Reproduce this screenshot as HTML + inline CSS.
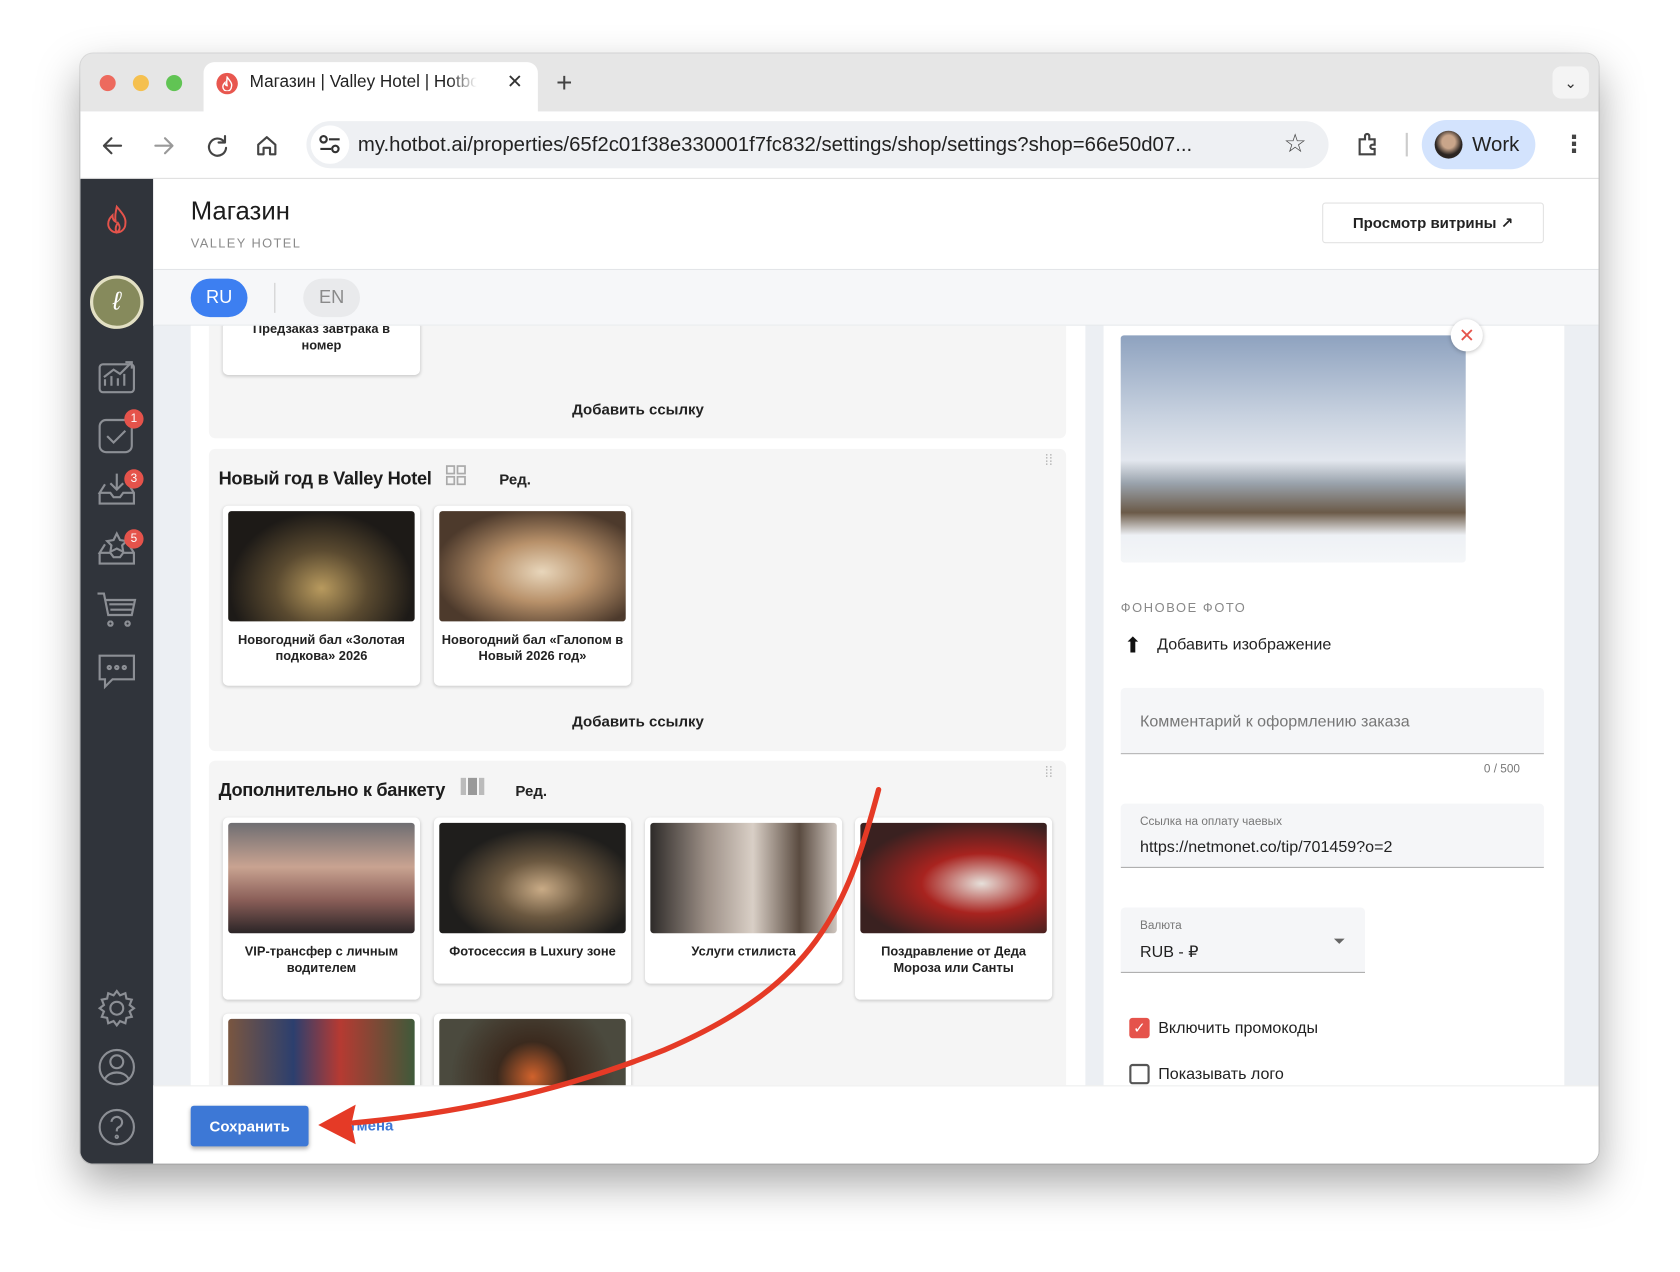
<!DOCTYPE html>
<html><head><meta charset="utf-8"><style>
*{box-sizing:border-box;margin:0;padding:0}
html,body{width:1680px;height:1271px;overflow:hidden;background:#fff;font-family:"Liberation Sans","DejaVu Sans",sans-serif}
#s{position:absolute;left:0;top:0;width:1568px;height:1187px;transform:scale(1.07143);transform-origin:0 0}
.a{position:absolute}
.win{left:75px;top:50px;width:1417px;height:1036px;border-radius:12px;overflow:hidden;box-shadow:0 18px 40px rgba(0,0,0,.35),0 0 0 1px rgba(0,0,0,.12);background:#eceff3}
.card{position:absolute;width:184px;background:#fff;border-radius:5px;box-shadow:0 1px 3px rgba(0,0,0,.18)}
.card .im{position:absolute;left:5px;top:5px;width:174px;height:103px;border-radius:3px}
.card .t{position:absolute;left:4px;right:4px;top:118px;text-align:center;font-size:12px;font-weight:bold;color:#222;line-height:15px}
.sec{position:absolute;left:120px;width:800px;background:#f5f5f5;border-radius:6px}
.ico{stroke:#8c8f95;fill:none;stroke-width:2}
.badge{position:absolute;width:18px;height:18px;border-radius:9px;background:#e5534b;color:#fff;font-size:11px;text-align:center;line-height:18px}
</style></head><body><div id="s">
<div class="a win">
 <div class="a" style="left:0;top:0;width:1417px;height:54px;background:#e6e6e6"></div>
 <div class="a" style="left:18px;top:20px;width:15px;height:15px;border-radius:8px;background:#ed6a5e"></div>
 <div class="a" style="left:49px;top:20px;width:15px;height:15px;border-radius:8px;background:#f5c04f"></div>
 <div class="a" style="left:80px;top:20px;width:15px;height:15px;border-radius:8px;background:#61c454"></div>
 <div class="a" style="left:115px;top:8px;width:312px;height:50px;background:#fff;border-radius:10px 10px 0 0"></div>
 <div class="a" style="left:127px;top:18px;width:20px;height:20px;border-radius:10px;background:#e8574f"></div>
 <svg class="a" style="left:131px;top:21px" width="12" height="14"><path d="M6 1c3 4 5 6 4 9a4 4 0 0 1-8 0c0-2 1-3 2-4 0 2 1 3 2 3-1-3 0-6 0-8z" fill="none" stroke="#fff" stroke-width="1.3"/></svg>
 <div class="a" style="left:158px;top:18px;font-size:16px;color:#222;width:212px;white-space:nowrap;overflow:hidden;-webkit-mask-image:linear-gradient(90deg,#000 88%,transparent)">Магазин | Valley Hotel | Hotbot</div>
 <div class="a" style="left:398px;top:16px;font-size:18px;color:#333">✕</div>
 <div class="a" style="left:444px;top:12px;font-size:26px;color:#444">+</div>
 <div class="a" style="left:1374px;top:12px;width:34px;height:30px;border-radius:8px;background:#f4f4f4;text-align:center;font-size:14px;line-height:30px;color:#333">⌄</div>
 <div class="a" style="left:0;top:54px;width:1417px;height:63px;background:#fff;border-bottom:1px solid #ddd"></div>
 <svg class="a" style="left:18px;top:74px" width="200" height="24" viewBox="0 0 200 24"><g fill="none" stroke="#444" stroke-width="2" stroke-linecap="round" stroke-linejoin="round"><path d="M20 12H5M11 5l-7 7 7 7"/><path d="M52 12h15M61 5l7 7-7 7" stroke="#999"/><path d="M116 8a8 8 0 1 0 2 6M117 3v6h-6"/><path d="M148 20v-9l8-7 8 7v9h-5v-6h-6v6z"/></g></svg>
 <div class="a" style="left:211px;top:63px;width:954px;height:44px;border-radius:22px;background:#eef0f3"></div>
 <div class="a" style="left:215px;top:67px;width:36px;height:36px;border-radius:18px;background:#fff"></div>
 <svg class="a" style="left:222px;top:75px" width="22" height="20"><g fill="none" stroke="#333" stroke-width="2"><circle cx="5" cy="5" r="3"/><path d="M10 5h10M2 14h10"/><circle cx="16" cy="14" r="3"/></g></svg>
 <div class="a" style="left:259px;top:75px;font-size:19px;color:#222;white-space:nowrap">my.hotbot.ai/properties/65f2c01f38e330001f7fc832/settings/shop/settings?shop=66e50d07...</div>
 <div class="a" style="left:1123px;top:70px;font-size:24px;color:#444">☆</div>
 <svg class="a" style="left:1190px;top:73px" width="24" height="24"><path d="M4 7h5V4a2 2 0 0 1 4 0v3h5v5h-2a2 2 0 0 0 0 4h2v5H4z" fill="none" stroke="#444" stroke-width="2"/></svg>
 <div class="a" style="left:1237px;top:74px;width:2px;height:22px;background:#ccc"></div>
 <div class="a" style="left:1252px;top:62px;width:106px;height:46px;border-radius:23px;background:#d3e3fd"></div>
 <div class="a" style="left:1264px;top:72px;width:26px;height:26px;border-radius:13px;background:radial-gradient(circle at 50% 40%,#c9a58a 30%,#2b2522 60%)"></div>
 <div class="a" style="left:1299px;top:75px;font-size:19px;color:#222">Work</div>
 <div class="a" style="left:1383px;top:72px;font-size:22px;color:#444;font-weight:bold">⋮</div>
 <div class="a" style="left:0;top:117px;width:68px;height:919px;background:#30343b"></div>
 <svg class="a" style="left:23px;top:141px" width="22" height="28"><path d="M11 2c5 6 9 10 8 16a8 8 0 0 1-16 0c0-4 2-6 4-8 0 3 1 5 3 6-1-5 0-9 1-14zM11 26c-2-3-1-6 1-9 2 3 3 6-1 9z" fill="none" stroke="#e5534b" stroke-width="1.8"/></svg>
 <div class="a" style="left:9px;top:207px;width:50px;height:50px;border-radius:25px;background:#868a5c;border:3px solid #e3e0c4;color:#fff;font-size:24px;text-align:center;line-height:44px;font-style:italic">ℓ</div>
 <svg class="a" style="left:14px;top:282px" width="40" height="400" viewBox="0 0 40 400">
  <g class="ico"><rect x="4" y="8" width="32" height="26" rx="3"/><path d="M9 28v-6M15 28v-9M21 28v-7M27 28v-11M8 20l9-7 6 4 11-11M28 6h6v6"/>
  <rect x="4" y="60" width="30" height="30" rx="6"/><path d="M11 75l6 6 11-11"/>
  <path d="M4 128v10h32v-10l-5-8M9 120l-5 8h10l3 4h6l3-4h10M20 110v14M14 119l6 6 6-6"/>
  <path d="M4 184v10h32v-10l-5-8M9 176l-5 8h10l3 4h6l3-4h10M20 166l3 6 6 1-4 4 1 6-6-3-6 3 1-6-4-4 6-1z"/>
  <path d="M2 222h6l4 20h22l3-14H10M14 248a2 2 0 1 0 .1 0M30 248a2 2 0 1 0 .1 0M13 232h22M14 237h20"/>
  <path d="M4 280h32v22H16l-7 7v-7H4z"/><circle cx="13" cy="291" r="1" stroke-width="3"/><circle cx="20" cy="291" r="1" stroke-width="3"/><circle cx="27" cy="291" r="1" stroke-width="3"/></g></svg>
 <div class="badge" style="left:41px;top:332px">1</div>
 <div class="badge" style="left:41px;top:388px">3</div>
 <div class="badge" style="left:41px;top:444px">5</div>
 <svg class="a" style="left:14px;top:871px" width="40" height="160" viewBox="0 0 40 160"><g class="ico">
  <circle cx="20" cy="20" r="6"/><path d="M20 4l3 4 5-2 1 5 5 1-2 5 4 3-4 3 2 5-5 1-1 5-5-2-3 4-3-4-5 2-1-5-5-1 2-5-4-3 4-3-2-5 5-1 1-5 5 2z"/>
  <circle cx="20" cy="75" r="16"/><circle cx="20" cy="70" r="6"/><path d="M9 86c4-8 18-8 22 0"/>
  <circle cx="20" cy="131" r="16"/><path d="M15 126a5 5 0 1 1 7 5c-2 1-2 2-2 4"/><circle cx="20" cy="140" r=".8" stroke-width="2.5"/></g></svg>
 <div class="a" style="left:68px;top:117px;width:1349px;height:85px;background:#fff;border-bottom:1px solid #e3e5e8"></div>
 <div class="a" style="left:103px;top:134px;font-size:24px;color:#1c1c1c">Магазин</div>
 <div class="a" style="left:103px;top:170px;font-size:12px;color:#8a8a8a;letter-spacing:1.3px">VALLEY HOTEL</div>
 <div class="a" style="left:1159px;top:139px;width:207px;height:38px;border:1px solid #e2e2e2;border-radius:3px;background:#fff;font-size:14px;font-weight:bold;color:#222;text-align:center;line-height:36px">Просмотр витрины ↗</div>
 <div class="a" style="left:68px;top:202px;width:1349px;height:52px;background:#f6f7f9;border-bottom:1px solid #e6e8eb"></div>
 <div class="a" style="left:103px;top:210px;width:53px;height:36px;border-radius:18px;background:#3d7ff1;color:#fff;font-size:17px;text-align:center;line-height:36px">RU</div>
 <div class="a" style="left:181px;top:214px;width:1px;height:28px;background:#ccc"></div>
 <div class="a" style="left:208px;top:210px;width:53px;height:36px;border-radius:18px;background:#e9eaec;color:#8a8a8a;font-size:17px;text-align:center;line-height:36px">EN</div>
 <div class="a" style="left:103px;top:254px;width:835px;height:709px;background:#fff;overflow:hidden">
  <div class="sec" style="left:17px;top:-20px;height:125px"></div>
  <div class="card" style="left:30px;top:-20px;height:66px"><div class="t" style="top:16px;left:18px;right:18px">Предзаказ завтрака в номер</div></div>
  <div class="a" style="left:0;width:835px;top:70px;text-align:center;font-size:14px;font-weight:bold;color:#222">Добавить ссылку</div>
  <div class="sec" style="left:17px;top:115px;height:282px"></div>
  <div class="a" style="left:26px;top:133px;font-size:17px;font-weight:bold;color:#1c1c1c;letter-spacing:-.3px">Новый год в Valley Hotel</div>
  <svg class="a" style="left:238px;top:130px" width="20" height="20"><g fill="none" stroke="#aaa" stroke-width="1.6"><rect x="1" y="1" width="7" height="7"/><rect x="11" y="1" width="7" height="7"/><rect x="1" y="11" width="7" height="7"/><rect x="11" y="11" width="7" height="7"/></g></svg>
  <div class="a" style="left:288px;top:135px;font-size:14px;font-weight:bold;color:#222">Ред.</div>
  <div class="a" style="left:797px;top:122px;color:#bbb;font-size:14px;line-height:7px">⁞⁞</div>
  <div class="card" style="left:30px;top:168px;height:168px"><div class="im" style="background:radial-gradient(ellipse at 50% 70%,#b89a5e 0%,#5a4a30 35%,#1d1a17 70%)"></div><div class="t">Новогодний бал «Золотая подкова» 2026</div></div>
  <div class="card" style="left:227px;top:168px;height:168px"><div class="im" style="background:radial-gradient(ellipse at 55% 55%,#e8d6bb 0%,#b8916a 35%,#4d3a2c 75%)"></div><div class="t">Новогодний бал «Галопом в Новый 2026 год»</div></div>
  <div class="a" style="left:0;width:835px;top:361px;text-align:center;font-size:14px;font-weight:bold;color:#222">Добавить ссылку</div>
  <div class="sec" style="left:17px;top:406px;height:320px"></div>
  <div class="a" style="left:26px;top:424px;font-size:17px;font-weight:bold;color:#1c1c1c;letter-spacing:-.3px">Дополнительно к банкету</div>
  <div class="a" style="left:252px;top:422px;width:22px;height:16px;background:linear-gradient(90deg,#bbb 0 22%,transparent 22% 30%,#999 30% 70%,transparent 70% 78%,#bbb 78%)"></div>
  <div class="a" style="left:303px;top:426px;font-size:14px;font-weight:bold;color:#222">Ред.</div>
  <div class="a" style="left:797px;top:413px;color:#bbb;font-size:14px;line-height:7px">⁞⁞</div>
  <div class="card" style="left:30px;top:459px;height:170px"><div class="im" style="background:linear-gradient(180deg,#6f6e72 0%,#c9a391 40%,#8a5e58 70%,#2b2527 100%)"></div><div class="t">VIP-трансфер с личным водителем</div></div>
  <div class="card" style="left:227px;top:459px;height:155px"><div class="im" style="background:radial-gradient(ellipse at 55% 60%,#c9ab86 0%,#6b5840 30%,#1f1e1c 65%)"></div><div class="t">Фотосессия в Luxury зоне</div></div>
  <div class="card" style="left:424px;top:459px;height:155px"><div class="im" style="background:linear-gradient(90deg,#2e2b29 0%,#9c8f86 30%,#d9cfc6 55%,#5a4b40 80%,#cfc6bf 100%)"></div><div class="t">Услуги стилиста</div></div>
  <div class="card" style="left:620px;top:459px;height:170px"><div class="im" style="background:radial-gradient(ellipse at 65% 55%,#e6e0da 0%,#a8231f 35%,#3a2120 75%)"></div><div class="t">Поздравление от Деда Мороза или Санты</div></div>
  <div class="card" style="left:30px;top:642px;height:120px"><div class="im" style="height:120px;background:linear-gradient(90deg,#7a5640 0%,#2c3f6e 35%,#b63a32 60%,#3f5a3a 100%)"></div></div>
  <div class="card" style="left:227px;top:642px;height:120px"><div class="im" style="height:120px;background:radial-gradient(circle at 50% 45%,#d0622c 0%,#3b2a1e 30%,#4b4a3e 70%)"></div></div>
 </div>
 <div class="a" style="left:955px;top:254px;width:430px;height:709px;background:#fff">
  <div class="a" style="left:16px;top:9px;width:322px;height:212px;border-radius:3px;background:linear-gradient(180deg,#8ea2bf 0%,#c7d1df 35%,#e3e7ee 55%,#9aa3ad 65%,#6b5a48 78%,#eef1f5 88%,#f4f6f8 100%)"></div>
  <div class="a" style="left:324px;top:-6px;width:30px;height:30px;border-radius:15px;background:#fff;box-shadow:0 1px 4px rgba(0,0,0,.25);color:#e5534b;text-align:center;line-height:30px;font-size:18px">✕</div>
  <div class="a" style="left:16px;top:256px;font-size:12px;color:#888;letter-spacing:1.5px">ФОНОВОЕ ФОТО</div>
  <div class="a" style="left:19px;top:286px;font-size:20px;color:#111">⬆</div>
  <div class="a" style="left:50px;top:289px;font-size:15px;color:#222">Добавить изображение</div>
  <div class="a" style="left:16px;top:338px;width:395px;height:62px;background:#f5f6f8;border-bottom:1px solid #999;border-radius:4px 4px 0 0"></div>
  <div class="a" style="left:34px;top:361px;font-size:15px;color:#777">Комментарий к оформлению заказа</div>
  <div class="a" style="left:355px;top:408px;font-size:11px;color:#777">0 / 500</div>
  <div class="a" style="left:16px;top:446px;width:395px;height:60px;background:#f5f6f8;border-bottom:1px solid #999;border-radius:4px 4px 0 0"></div>
  <div class="a" style="left:34px;top:457px;font-size:11px;color:#777">Ссылка на оплату чаевых</div>
  <div class="a" style="left:34px;top:478px;font-size:15px;color:#222">https://netmonet.co/tip/701459?o=2</div>
  <div class="a" style="left:16px;top:543px;width:228px;height:61px;background:#f5f6f8;border-bottom:1px solid #999;border-radius:4px 4px 0 0"></div>
  <div class="a" style="left:34px;top:554px;font-size:11px;color:#777">Валюта</div>
  <div class="a" style="left:34px;top:575px;font-size:15px;color:#222">RUB - ₽</div>
  <div class="a" style="left:215px;top:572px;width:0;height:0;border-left:5px solid transparent;border-right:5px solid transparent;border-top:5px solid #666"></div>
  <div class="a" style="left:24px;top:646px;width:19px;height:19px;border-radius:3px;background:#e5534b;color:#fff;font-size:14px;text-align:center;line-height:19px">✓</div>
  <div class="a" style="left:51px;top:647px;font-size:15px;color:#222">Включить промокоды</div>
  <div class="a" style="left:24px;top:689px;width:19px;height:19px;border-radius:3px;border:2px solid #555"></div>
  <div class="a" style="left:51px;top:690px;font-size:15px;color:#222">Показывать лого</div>
 </div>
 <div class="a" style="left:68px;top:963px;width:1349px;height:73px;background:#fff;border-top:1px solid #eee"></div>
 <div class="a" style="left:103px;top:982px;width:110px;height:38px;border-radius:3px;background:#3d78d6;color:#fff;font-size:14px;font-weight:bold;text-align:center;line-height:38px;box-shadow:0 2px 4px rgba(0,0,0,.3)">Сохранить</div>
 <div class="a" style="left:240px;top:992px;font-size:14px;font-weight:bold;color:#3d78d6">Отмена</div>
</div>
<svg class="a" style="left:0;top:0" width="1568" height="1187"><path d="M820 737C790 850 760 920 620 980C520 1020 420 1040 330 1048" fill="none" stroke="#e53a26" stroke-width="5" stroke-linecap="round"/><path d="M297 1050L332 1031 328 1049 332 1068z" fill="#e53a26"/></svg>
</div></body></html>
